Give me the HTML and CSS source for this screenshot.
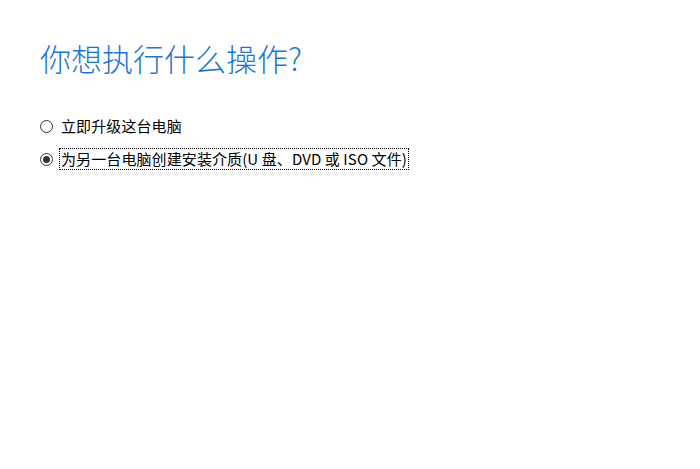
FILE: index.html
```html
<html>
<head>
	<meta charset="utf-8">
	<link rel="stylesheet" href="styles.css">
</head>
<body>
	<div class="page">
		<h1 class="title">你想执行什么操作?</h1>

		<div class="choices">
			<label class="choice">
				<input type="radio" name="action" value="upgrade">
				<span class="choice-text">立即升级这台电脑</span>
			</label>
			<label class="choice">
				<input type="radio" name="action" value="media" checked>
				<span class="choice-text focused">为另一台电脑创建安装介质(U 盘、DVD 或 ISO 文件)</span>
			</label>
		</div>
	</div>
</body>
</html>
```

FILE: styles.css
```css
body{
	margin:0;
	background:#fff;
	font-family:"Noto Sans CJK SC", "Noto Sans", sans-serif;
	color:#000;
}

.page{
	padding:36px 0 0 40px;
}

.title{
	margin:0;
	font-size:31px;
	font-weight:300;
	line-height:44px;
	color:#1a76d0;
}

.choices{
	margin-top:35px;
	display:flex;
	flex-direction:column;
	gap:11px;
}

.choice{
	display:flex;
	align-items:center;
	gap:6px;
	font-size:15px;
	line-height:20px;
}

.choice input{
	appearance:none;
	-webkit-appearance:none;
	margin:0;
	width:13px;
	height:13px;
	border:1px solid #333;
	border-radius:50%;
	box-sizing:border-box;
	display:flex;
	align-items:center;
	justify-content:center;
}
.choice input:checked::after{
	content:"";
	width:7px;
	height:7px;
	border-radius:50%;
	background:#333;
}

.choice-text{
	padding:0 1px;
	border:1px dotted transparent;
	letter-spacing:0.1px;
}
.choice-text.focused{
	border-color:#000;
}
```
